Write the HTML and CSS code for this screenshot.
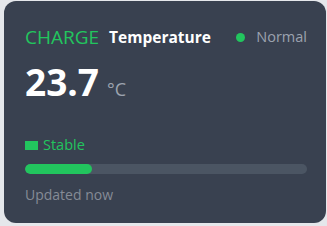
FILE: index.html
```html
<!DOCTYPE html>
<html>
<head>
<meta charset="utf-8">
<link rel="stylesheet" href="styles.css">
</head>
<body>
<div class="card">
  <div class="header">
    <div class="title">
      <span class="tag">CHARGE</span>
      <span class="name">Temperature</span>
    </div>
    <div class="status"><span class="dot"></span><span>Normal</span></div>
  </div>
  <div class="value">
    <span class="num">23.7</span><span class="unit">°C</span>
  </div>
  <div class="trend"><span class="square"></span><span>Stable</span></div>
  <div class="bar"><div class="fill" style="width: 23.7%"></div></div>
  <div class="updated">Updated now</div>
</div>
</body>
</html>
```
FILE: styles.css
```css
html, body {
  margin: 0;
  padding: 0;
  background: #e5e7eb;
}
body {
  padding: 1px 1px 3px 4px;
  font-family: "Open Sans", "Noto Sans", sans-serif;
}
.card {
  box-sizing: border-box;
  height: 222px;
  background: #394150;
  border-radius: 12px;
  padding: 22px 19px 18px 21px;
}
.header {
  display: flex;
  align-items: center;
  justify-content: space-between;
  height: 28px;
}
.title {
  display: flex;
  align-items: center;
  gap: 10px;
}
.tag {
  color: #22c55e;
  font-size: 19px;
  line-height: 28px;
}
.name {
  color: #ffffff;
  font-size: 15.5px;
  font-weight: 700;
  line-height: 28px;
}
.status {
  display: flex;
  align-items: center;
  gap: 11px;
  color: #9ca3af;
  font-size: 14.5px;
  line-height: 28px;
}
.dot {
  width: 9px;
  height: 9px;
  border-radius: 50%;
  background: #22c55e;
}
.value {
  margin-top: 11px;
  height: 40px;
  display: flex;
  align-items: baseline;
  line-height: 40px;
}
.num {
  color: #ffffff;
  font-size: 37px;
  font-weight: 700;
}
.unit {
  color: #9ca3af;
  font-size: 18px;
  margin-left: 8px;
}
.trend {
  margin-top: 33px;
  display: flex;
  align-items: center;
  gap: 5px;
  color: #22c55e;
  font-size: 14.5px;
  line-height: 20px;
}
.square {
  width: 13px;
  height: 9px;
  background: #22c55e;
}
.bar {
  margin-top: 9px;
  height: 10px;
  border-radius: 5px;
  background: #4b5563;
  overflow: hidden;
}
.fill {
  height: 100%;
  border-radius: 5px;
  background: #22c55e;
}
.updated {
  margin-top: 11px;
  color: #858b96;
  font-size: 14px;
  line-height: 20px;
}
```
